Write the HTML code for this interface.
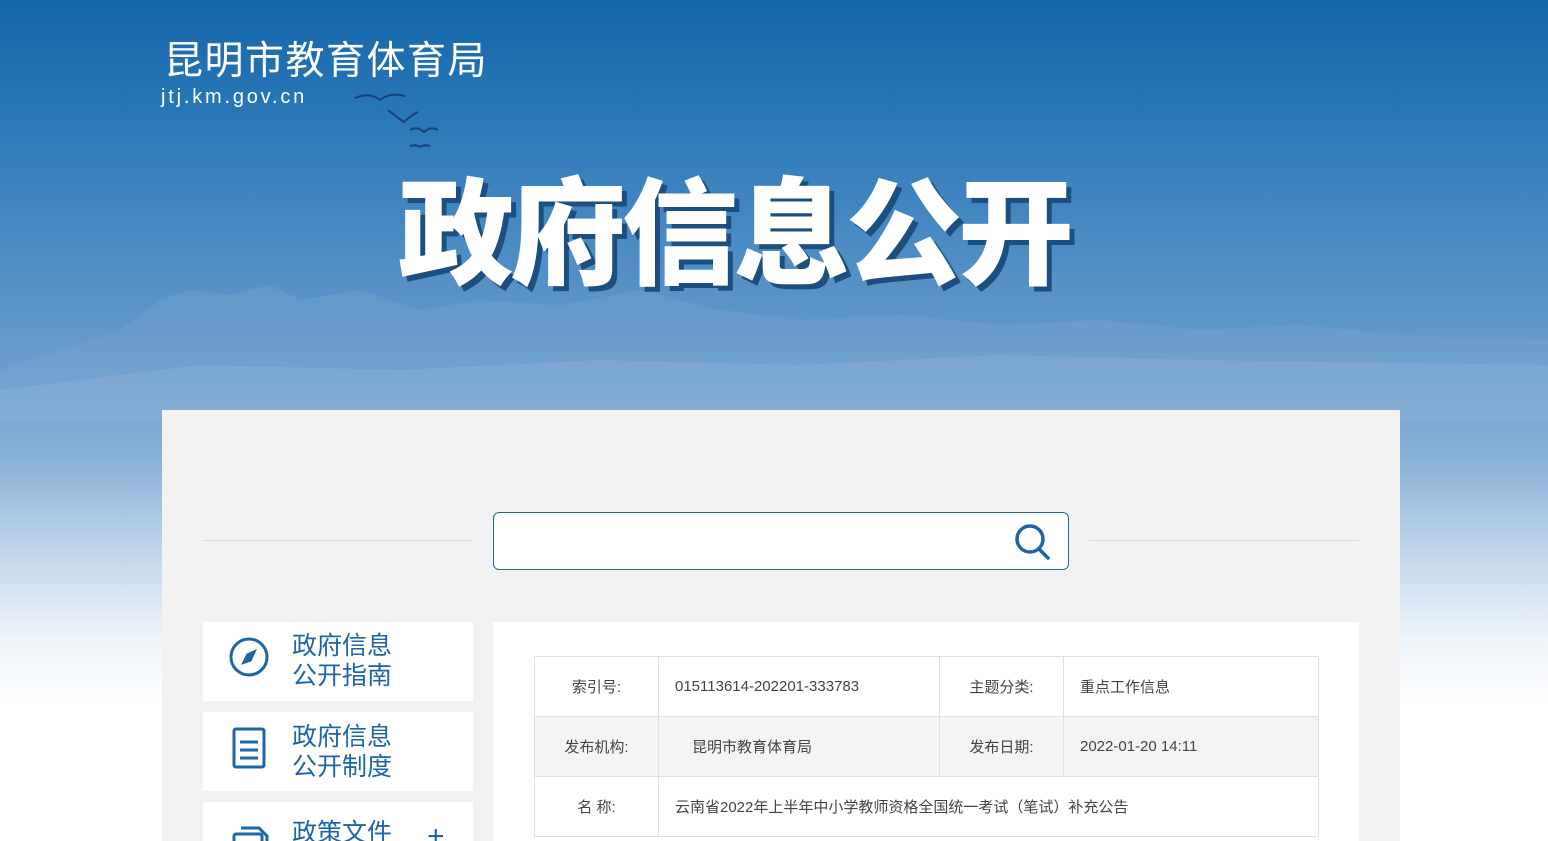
<!DOCTYPE html>
<html style="width:1548px;height:841px;overflow:hidden;background:#fff"><head><meta charset="utf-8">
<style>
*{margin:0;padding:0;box-sizing:border-box}
body{width:1548px;height:841px;overflow:hidden;position:relative;font-family:"Liberation Sans","Noto Sans CJK SC",sans-serif;background:#fff}
.bg{position:absolute;left:0;top:0;width:1548px;height:841px;background:linear-gradient(180deg,#1466aa 0px,#2b78b8 120px,#4d8cc4 250px,#6e9fcd 380px,#8fb5da 470px,#c5d9ec 560px,#eef4fa 640px,#fff 700px);}
.mt{position:absolute;left:0;top:270px;width:1548px;height:150px}
.logo{position:absolute;left:164px;top:30px;color:#fff;font-size:39px;letter-spacing:1.5px}
.url{position:absolute;left:161px;top:86px;color:#fff;font-size:20px;letter-spacing:2.8px}
.big{position:absolute;left:398px;top:160px;color:#fff;font-size:116px;font-weight:900;letter-spacing:-4px;text-shadow:5px 5px 0 #1d4e80;font-family:"Noto Sans CJK SC",sans-serif;line-height:130px}
.panel{position:absolute;left:162px;top:410px;width:1238px;height:431px;background:#f2f2f2}
.line{position:absolute;top:540px;height:1px;background:#d8d8d8;width:270px}
.search{position:absolute;left:493px;top:512px;width:576px;height:58px;border:1px solid #1f67ab;border-radius:6px;background:#fff}
.side{position:absolute;left:203px;width:270px;height:79px;background:#fff;overflow:hidden}
.side .t{position:absolute;left:89px;top:9px;color:#1d65a8;font-size:25px;line-height:30px}
.side svg{position:absolute;left:26px;top:14px}
.main{position:absolute;left:493px;top:622px;width:866px;height:219px;background:#fff}
table{position:absolute;left:534px;top:656px;border-collapse:collapse;font-size:15px;color:#444}
td{border:1px solid #e0e0e0;height:60px;padding:0 16px}
td.l{width:124px;text-align:center;padding:0}
</style></head><body>
<div class="bg"></div>
<svg class="mt" viewBox="0 0 1548 150" preserveAspectRatio="none">
<path d="M0 100 L60 80 L120 60 L160 30 L190 20 L230 25 L270 15 L300 30 L360 20 L420 40 L480 30 L560 35 L640 20 L720 40 L800 50 L900 45 L1000 55 L1100 50 L1200 60 L1300 55 L1400 65 L1548 70 L1548 150 L0 150Z" fill="#7ea8d2" opacity=".3"/>
<path d="M0 120 L200 95 L400 100 L600 90 L800 95 L1000 85 L1200 90 L1548 95 L1548 150 L0 150Z" fill="#9bbde0" opacity=".25"/>
</svg>
<svg style="position:absolute;left:350px;top:88px" width="90" height="65"><g fill="none" stroke="#1b3f78" stroke-width="2"><path d="M5 10 Q20 4 30 12 Q40 4 55 8"/><path d="M38 22 Q48 30 54 34 Q60 28 68 24"/><path d="M60 42 Q68 38 74 44 Q80 38 88 42"/><path d="M60 58 Q66 56 70 59 Q75 56 80 58"/></g></svg>
<div class="logo">昆明市教育体育局</div>
<div class="url">jtj.km.gov.cn</div>
<div class="big">政府信息公开</div>
<div class="panel"></div>
<div class="line" style="left:203px"></div>
<div class="line" style="left:1089px"></div>
<div class="search"><svg style="position:absolute;left:519px;top:9px" width="40" height="40" fill="none" stroke="#1d65a8" stroke-width="3.5"><circle cx="17" cy="17" r="13"/><path d="M26 27 L35 36" stroke-linecap="round"/></svg></div>
<div class="side" style="top:622px"><svg width="42" height="42" fill="none" stroke="#1d65a8" stroke-width="3"><circle cx="20" cy="21" r="18"/><path d="M27 14 L22 25 L13 28 L18 18Z" fill="#1d65a8" stroke-width="1"/></svg><div class="t">政府信息<br>公开指南</div></div>
<div class="side" style="top:712px"><svg width="42" height="46" fill="none" stroke="#1d65a8" stroke-width="3"><rect x="5" y="3" width="30" height="38" rx="2"/><path d="M11 16H29M11 24H29M11 32H29"/></svg><div class="t" style="top:10px">政府信息<br>公开制度</div></div>
<div class="side" style="top:802px"><svg width="42" height="46" fill="none" stroke="#1d65a8" stroke-width="3"><rect x="5" y="18" width="28" height="30" rx="2"/><path d="M12 12H30L38 20V40"/></svg><div class="t" style="top:16px">政策文件</div><div style="position:absolute;left:224px;top:18px;color:#1d65a8;font-size:30px">+</div></div>
<div class="main"></div>
<table>
<tr><td class="l">索引号:</td><td style="width:281px">015113614-202201-333783</td><td class="l">主题分类:</td><td style="width:255px">重点工作信息</td></tr>
<tr style="background:#f4f4f4"><td class="l">发布机构:</td><td style="padding-left:33px">昆明市教育体育局</td><td class="l">发布日期:</td><td>2022-01-20 14:11</td></tr>
<tr><td class="l">名 称:</td><td colspan="3">云南省2022年上半年中小学教师资格全国统一考试（笔试）补充公告</td></tr>
</table>
</body></html>
